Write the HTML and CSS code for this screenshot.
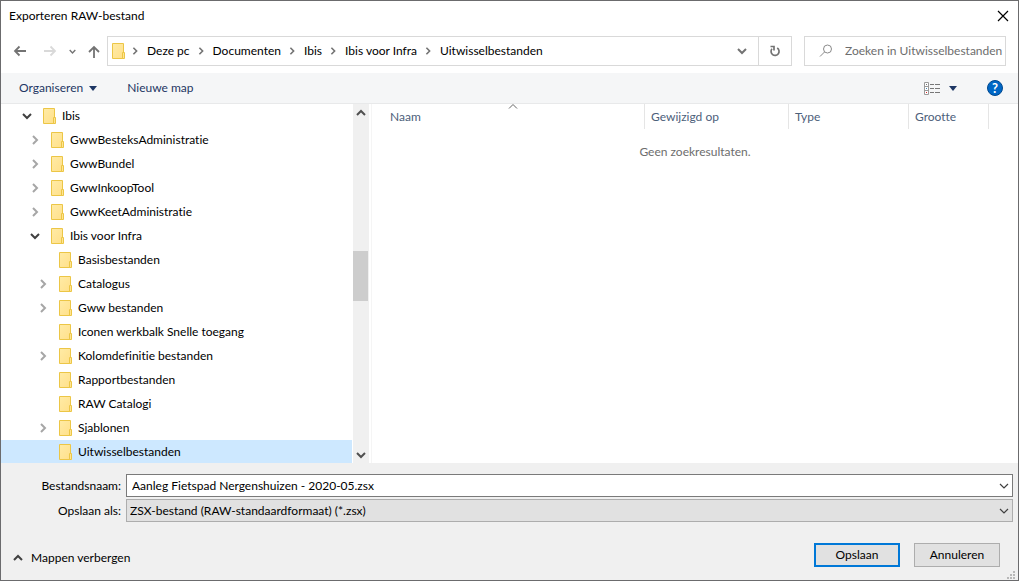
FILE: index.html
```html
<!DOCTYPE html>
<html lang="nl">
<head>
<meta charset="utf-8">
<meta name="viewport" content="width=device-width, initial-scale=1">
<title>Exporteren RAW-bestand</title>
<link rel="stylesheet" href="styles.css">
</head>
<body>
<svg class="sprite" aria-hidden="true">
  <defs>
    <linearGradient id="paper" x1="0" y1="0" x2="1" y2="1">
      <stop offset="0" stop-color="#ffeba6"/>
      <stop offset="1" stop-color="#ffe08a"/>
    </linearGradient>
  </defs>
  <symbol id="folder" viewBox="0 0 14 16">
    <path d="M.5.5h11v15H.5z" fill="url(#paper)" stroke="#ecc646"/>
    <path d="M10.500 9.500h2v6h-2z" fill="#ffe592" stroke="#ecc646"/>
  </symbol>
  <symbol id="right" viewBox="0 0 10 10"><path d="M3 1l4 4-4 4" fill="none" stroke="currentColor" stroke-width="2"/></symbol>
  <symbol id="down" viewBox="0 0 10 10"><path d="M1 3l4 4 4-4" fill="none" stroke="currentColor" stroke-width="2"/></symbol>
  <symbol id="up" viewBox="0 0 10 10"><path d="M1 7l4-4 4 4" fill="none" stroke="currentColor" stroke-width="2"/></symbol>
  <symbol id="thin-down" viewBox="0 0 10 10"><path d="M1 3l4 4 4-4" fill="none" stroke="currentColor" stroke-width="1.200"/></symbol>
</svg>

<main class="dialog">
  <header class="titlebar">
    <h1 class="title">Exporteren RAW-bestand</h1>
    <button class="close" type="button" aria-label="Sluiten">
      <svg width="12" height="12" viewBox="0 0 12 12"><path d="M1 1l10 10M11 1L1 11" stroke="#000" stroke-width="1.200"/></svg>
    </button>
  </header>

  <nav class="navbar" aria-label="Locatie">
    <div class="history">
      <button class="nav-btn" type="button" aria-label="Terug"><svg width="14" height="14" viewBox="0 0 14 14"><path d="M13 7H2M6.500 2.500L2 7l4.500 4.500" fill="none" stroke="#737373" stroke-width="1.800"/></svg></button>
      <button class="nav-btn nav-off" type="button" aria-label="Vooruit"><svg width="14" height="14" viewBox="0 0 14 14"><path d="M1 7h11M7.500 2.500L12 7l-4.500 4.500" fill="none" stroke="#d9d9d9" stroke-width="1.800"/></svg></button>
      <button class="nav-btn nav-recent" type="button" aria-label="Recente locaties"><svg width="7" height="7"><use href="#down"/></svg></button>
      <button class="nav-btn nav-up" type="button" aria-label="Omhoog"><svg width="14" height="14" viewBox="0 0 14 14"><path d="M7 14V3M2 8l5-5 5 5" fill="none" stroke="#737373" stroke-width="1.800"/></svg></button>
    </div>
    <div class="address">
      <svg class="folder" width="14" height="16"><use href="#folder"/></svg>
      <ol class="crumbs">
        <li><svg width="8" height="8"><use href="#right"/></svg><a href="#">Deze pc</a></li>
        <li><svg width="8" height="8"><use href="#right"/></svg><a href="#">Documenten</a></li>
        <li><svg width="8" height="8"><use href="#right"/></svg><a href="#">Ibis</a></li>
        <li><svg width="8" height="8"><use href="#right"/></svg><a href="#">Ibis voor Infra</a></li>
        <li><svg width="8" height="8"><use href="#right"/></svg><a href="#">Uitwisselbestanden</a></li>
      </ol>
      <button class="addr-btn" type="button" aria-label="Vorige locaties"><svg width="10" height="10"><use href="#down"/></svg></button>
      <button class="addr-btn addr-refresh" type="button" aria-label="Vernieuwen">
        <svg width="12" height="12" viewBox="0 0 12 12"><path d="M8.200 3A4 4 0 1 1 3 3.800M1.500 1.500H5v4" fill="none" stroke="#737373" stroke-width="1.700"/></svg>
      </button>
    </div>
    <label class="search">
      <svg width="14" height="14" viewBox="0 0 14 14"><circle cx="8.500" cy="5" r="4" fill="none" stroke="#8a8a8a"/><path d="M5.500 8L1 12.500" stroke="#8a8a8a"/></svg>
      <input class="search-input" type="search" aria-label="Zoeken" placeholder="Zoeken in Uitwisselbestanden">
    </label>
  </nav>

  <div class="toolbar">
    <button class="tool" type="button">Organiseren <svg width="8" height="5" viewBox="0 0 8 5"><path d="M0 0h8L4 5z" fill="#1e3764"/></svg></button>
    <button class="tool" type="button">Nieuwe map</button>
    <button class="tool tool-view" type="button" aria-label="Weergave wijzigen">
      <svg width="16" height="13" viewBox="0 0 16 13"><path d="M.5.500h4v12h-4zM.500 4.500h4M.500 8.500h4" fill="#fff" stroke="#9a9a9a"/><path d="M2 2h1v1H2z" fill="#777"/><path d="M2 6h1v1H2z" fill="#48b"/><path d="M2 10h1v1H2z" fill="#d22"/><path d="M6 2.500h4m1 0h5M6 6.500h4m1 0h5M6 10.500h4m1 0h5" stroke="#777"/></svg>
      <svg width="8" height="5" viewBox="0 0 8 5"><path d="M0 0h8L4 5z" fill="#1e3764"/></svg>
    </button>
    <button class="help" type="button" aria-label="Help">?</button>
  </div>

  <div class="content">
    <ul class="tree">
      <li class="node"><button class="twist open" type="button" aria-label="Samenvouwen"><svg width="10" height="10"><use href="#down"/></svg></button><svg class="folder" width="14" height="16"><use href="#folder"/></svg>Ibis</li>
      <li class="node level-1"><button class="twist" type="button" aria-label="Uitvouwen"><svg width="10" height="10"><use href="#right"/></svg></button><svg class="folder" width="14" height="16"><use href="#folder"/></svg>GwwBesteksAdministratie</li>
      <li class="node level-1"><button class="twist" type="button" aria-label="Uitvouwen"><svg width="10" height="10"><use href="#right"/></svg></button><svg class="folder" width="14" height="16"><use href="#folder"/></svg>GwwBundel</li>
      <li class="node level-1"><button class="twist" type="button" aria-label="Uitvouwen"><svg width="10" height="10"><use href="#right"/></svg></button><svg class="folder" width="14" height="16"><use href="#folder"/></svg>GwwInkoopTool</li>
      <li class="node level-1"><button class="twist" type="button" aria-label="Uitvouwen"><svg width="10" height="10"><use href="#right"/></svg></button><svg class="folder" width="14" height="16"><use href="#folder"/></svg>GwwKeetAdministratie</li>
      <li class="node level-1"><button class="twist open" type="button" aria-label="Samenvouwen"><svg width="10" height="10"><use href="#down"/></svg></button><svg class="folder" width="14" height="16"><use href="#folder"/></svg>Ibis voor Infra</li>
      <li class="node level-2"><span class="twist"></span><svg class="folder" width="14" height="16"><use href="#folder"/></svg>Basisbestanden</li>
      <li class="node level-2"><button class="twist" type="button" aria-label="Uitvouwen"><svg width="10" height="10"><use href="#right"/></svg></button><svg class="folder" width="14" height="16"><use href="#folder"/></svg>Catalogus</li>
      <li class="node level-2"><button class="twist" type="button" aria-label="Uitvouwen"><svg width="10" height="10"><use href="#right"/></svg></button><svg class="folder" width="14" height="16"><use href="#folder"/></svg>Gww bestanden</li>
      <li class="node level-2"><span class="twist"></span><svg class="folder" width="14" height="16"><use href="#folder"/></svg>Iconen werkbalk Snelle toegang</li>
      <li class="node level-2"><button class="twist" type="button" aria-label="Uitvouwen"><svg width="10" height="10"><use href="#right"/></svg></button><svg class="folder" width="14" height="16"><use href="#folder"/></svg>Kolomdefinitie bestanden</li>
      <li class="node level-2"><span class="twist"></span><svg class="folder" width="14" height="16"><use href="#folder"/></svg>Rapportbestanden</li>
      <li class="node level-2"><span class="twist"></span><svg class="folder" width="14" height="16"><use href="#folder"/></svg>RAW Catalogi</li>
      <li class="node level-2"><button class="twist" type="button" aria-label="Uitvouwen"><svg width="10" height="10"><use href="#right"/></svg></button><svg class="folder" width="14" height="16"><use href="#folder"/></svg>Sjablonen</li>
      <li class="node level-2 selected"><span class="twist"></span><svg class="folder" width="14" height="16"><use href="#folder"/></svg>Uitwisselbestanden</li>
    </ul>
    <div class="scrollbar">
      <button class="scroll-btn" type="button" aria-label="Omhoog schuiven"><svg width="10" height="10"><use href="#up"/></svg></button>
      <div class="track-before"></div>
      <div class="thumb"></div>
      <div class="track-after"></div>
      <button class="scroll-btn" type="button" aria-label="Omlaag schuiven"><svg width="10" height="10"><use href="#down"/></svg></button>
    </div>
    <section class="files">
      <table class="columns">
        <thead>
          <tr>
            <th class="col-name" scope="col">Naam<svg class="sort" width="10" height="5" viewBox="0 0 10 5"><path d="M1 4.500l4-4 4 4" fill="none" stroke="#666"/></svg></th>
            <th class="col-date" scope="col">Gewijzigd op</th>
            <th class="col-type" scope="col">Type</th>
            <th class="col-size" scope="col">Grootte</th>
            <th class="col-rest"></th>
          </tr>
        </thead>
      </table>
      <p class="empty">Geen zoekresultaten.</p>
    </section>
  </div>

  <form class="form">
    <div class="fields">
      <label for="filename">Bestandsnaam:</label>
      <div class="combo">
        <input id="filename" class="combo-input" type="text" value="Aanleg Fietspad Nergenshuizen - 2020-05.zsx">
        <button class="combo-btn" type="button" aria-label="Eerdere namen"><svg width="10" height="10"><use href="#thin-down"/></svg></button>
      </div>
      <label for="filetype">Opslaan als:</label>
      <div class="combo combo-grey">
        <select id="filetype" class="combo-select"><option>ZSX-bestand (RAW-standaardformaat) (*.zsx)</option></select>
        <svg class="combo-arrow" width="10" height="10"><use href="#thin-down"/></svg>
      </div>
    </div>
    <div class="actions">
      <button class="hide" type="button"><svg width="10" height="10"><use href="#up"/></svg>Mappen verbergen</button>
      <button class="btn btn-default" type="submit">Opslaan</button>
      <button class="btn" type="button">Annuleren</button>
    </div>
    <svg class="grip" width="8" height="8" viewBox="0 0 8 8"><path d="M6 0h2v2H6zM3 3h2v2H3zM6 3h2v2H6zM0 6h2v2H0zM3 6h2v2H3zM6 6h2v2H6z" fill="#b8b8b8"/></svg>
  </form>
</main>
</body>
</html>
```
FILE: styles.css
```css
* {
  box-sizing: border-box;
}

body {
  margin: 0;
  font: 12px/16px Lato, "Open Sans", sans-serif;
  font-variant-ligatures: none;
  color: #000;
}

button,
input,
select {
  margin: 0;
  padding: 0;
  border: 0;
  background: none;
  font: inherit;
  color: inherit;
  appearance: none;
}

svg {
  display: block;
  flex: none;
}

.sprite {
  position: absolute;
  width: 0;
  height: 0;
}

.dialog {
  display: flex;
  flex-direction: column;
  height: 100vh;
  border: 1px solid #6b6b6d;
  background: #fff;
}

/* Title bar */
.titlebar {
  display: flex;
  justify-content: space-between;
  align-items: center;
  padding: 0 9px 0 8px;
  height: 29px;
}

.title {
  margin: 0;
  font-size: 12px;
  font-weight: 400;
}

/* Navigation */
.navbar {
  display: flex;
  padding: 6px 12px 7px 12px;
}

.history {
  display: flex;
  align-items: center;
  width: 94px;
}

.nav-btn {
  color: #737373;
}

.nav-off {
  margin-left: 16px;
}

.nav-recent {
  margin-left: 12px;
}

.nav-up {
  margin-left: 11px;
}

.address {
  display: flex;
  flex: 1;
  align-items: center;
  height: 30px;
  padding-left: 4px;
  border: 1px solid #d9d9d9;
}

.crumbs {
  display: flex;
  flex: 1;
  margin: 0;
  padding: 0;
  list-style: none;
  color: #737373;
}

.crumbs li {
  display: flex;
  align-items: center;
  gap: 8px;
  padding-left: 7px;
}

.crumbs a {
  color: #000;
  text-decoration: none;
}

.crumbs li:first-child {
  padding-left: 5px;
}

.addr-btn {
  display: grid;
  place-items: center;
  width: 33px;
  height: 28px;
  color: #737373;
}

.addr-refresh {
  border-left: 1px solid #d9d9d9;
}

.search {
  display: flex;
  align-items: center;
  gap: 12px;
  width: 202px;
  margin-left: 12px;
  padding-left: 14px;
  border: 1px solid #d9d9d9;
}

.search-input {
  flex: 1;
  min-width: 0;
  outline: 0;
}

.search-input::placeholder {
  color: #6d6d6d;
  opacity: 1;
}

.search-input::-webkit-search-cancel-button {
  display: none;
}

/* Toolbar */
.toolbar {
  display: flex;
  align-items: center;
  gap: 30px;
  height: 31px;
  padding: 0 15px 0 18px;
  border-bottom: 1px solid #e8e9ea;
  background: #f5f6f7;
}

.tool {
  display: flex;
  align-items: center;
  gap: 6px;
  color: #1e3764;
}

.tool-view {
  gap: 9px;
  margin-left: auto;
}

.help {
  width: 16px;
  height: 16px;
  border: 1px solid #00488f;
  border-radius: 50%;
  background: #0067c5;
  color: #fff;
  font-size: 13px;
  font-weight: 700;
  line-height: 14px;
  text-align: center;
}

/* Folder tree */
.content {
  display: flex;
  flex: 1;
  min-height: 0;
}

.tree {
  width: 351px;
  margin: 0;
  padding: 0;
  overflow: hidden;
  list-style: none;
}

.node {
  display: flex;
  align-items: center;
  height: 24px;
  padding-left: 21px;
  white-space: nowrap;
}

.level-1 {
  padding-left: 29px;
}

.level-2 {
  padding-left: 37px;
}

.selected {
  background: #cde8ff;
}

.twist {
  width: 21px;
  color: #a6a6a6;
}

.open {
  color: #404040;
}

.node .folder {
  margin-right: 5px;
}

.scrollbar {
  display: flex;
  flex-direction: column;
  width: 16px;
  margin-left: 1px;
  background: #f0f0f0;
}

.scroll-btn {
  display: grid;
  place-items: center;
  height: 17px;
  color: #505050;
}

.track-before {
  flex: 130;
}

.thumb {
  height: 50px;
  margin-right: 1px;
  background: #cdcdcd;
}

.track-after {
  flex: 145;
}

/* File list */
.files {
  flex: 1;
  min-width: 0;
  margin-left: 2px;
  border-left: 1px solid #f5f5f5;
}

.columns {
  width: 100%;
  table-layout: fixed;
  border-spacing: 0;
}

.columns th {
  position: relative;
  height: 25px;
  padding: 0 0 0 6px;
  border-right: 1px solid #e5e5e5;
  color: #4c607a;
  font-weight: 400;
  text-align: left;
}

.columns .col-name {
  width: 273px;
  padding-left: 18px;
}

.col-date {
  width: 144px;
}

.col-type {
  width: 120px;
}

.col-size {
  width: 80px;
}

.columns .col-rest {
  border-right: 0;
}

.sort {
  position: absolute;
  top: 0;
  left: 50%;
}

.empty {
  margin: 15px 0 0;
  color: #6d6d6d;
  text-align: center;
}

/* File name and type */
.form {
  position: relative;
  padding: 11px 5px 13px;
  background: #f0f0f0;
}

.fields {
  display: grid;
  grid-template-columns: 115px 1fr;
  align-items: center;
  gap: 2px 5px;
}

.fields label {
  text-align: right;
}

.combo {
  position: relative;
  display: flex;
  align-items: center;
  height: 23px;
  border: 1px solid #7a7a7a;
  background: #fff;
}

.combo-grey {
  border-color: #adadad;
  background: #e1e1e1;
}

.combo-input {
  flex: 1;
  min-width: 0;
  padding-left: 5px;
  outline: 0;
}

.combo-select {
  flex: 1;
  min-width: 0;
  padding-left: 3px;
}

.combo-btn {
  padding-right: 3px;
  color: #404040;
}

.combo-arrow {
  position: absolute;
  right: 3px;
  color: #404040;
  pointer-events: none;
}

.actions {
  display: flex;
  align-items: center;
  gap: 14px;
  margin-top: 21px;
  padding: 0 13px 0 7px;
}

.hide {
  display: flex;
  align-items: center;
  gap: 8px;
  margin: 6px auto 0 0;
}

.hide svg {
  color: #404040;
}

.btn {
  width: 86px;
  height: 24px;
  border: 1px solid #adadad;
  background: #e1e1e1;
}

.btn-default {
  border: 2px solid #0078d7;
}

.grip {
  position: absolute;
  right: 3px;
  bottom: 1px;
}
```
